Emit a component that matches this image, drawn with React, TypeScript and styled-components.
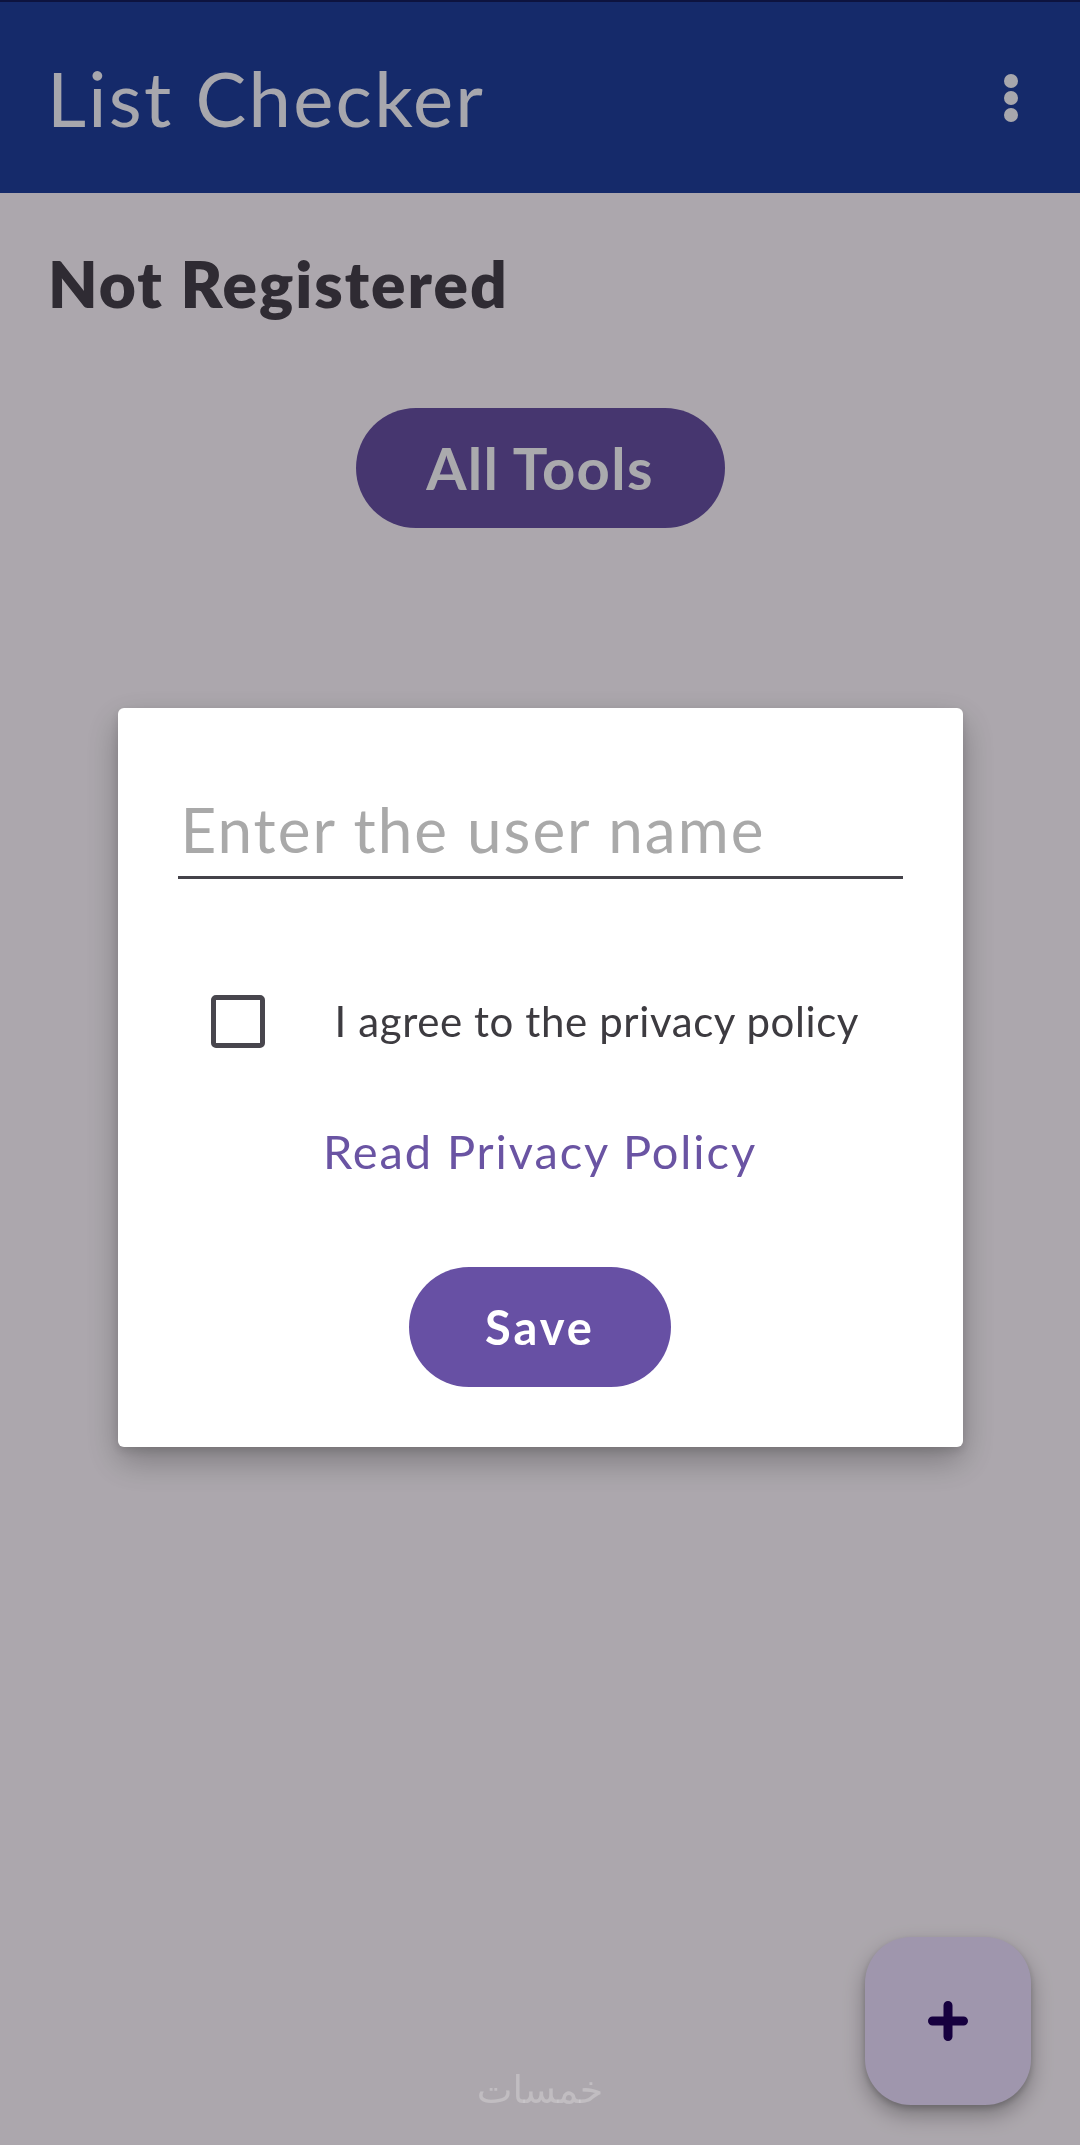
import React from "react";
import styled, { createGlobalStyle } from "styled-components";

const Global = createGlobalStyle`
  html, body { margin: 0; padding: 0; }
  body {
    background: #fef7ff;
    font-family: Lato, "Noto Sans", sans-serif;
    width: 1080px;
    height: 2145px;
    overflow: hidden;
  }
  * { box-sizing: border-box; }
`;

const Page = styled.div`
  position: relative;
  width: 1080px;
  height: 2145px;
  background: #fef7ff;
  display: flex;
  flex-direction: column;
`;

const AppBar = styled.header`
  height: 193px;
  border-top: 2px solid #141d5e;
  background: #1f3e9d;
  display: flex;
  align-items: center;
  justify-content: space-between;
  padding: 0 54px 0 47px;
`;

const AppTitle = styled.h1`
  margin: 0;
  font-family: Lato, sans-serif;
  font-weight: 400;
  font-size: 76px;
  line-height: 1.2;
  color: #f7f7ff;
  letter-spacing: 2.3px;
`;

const MenuButton = styled.button`
  border: 0;
  background: transparent;
  padding: 0;
  width: 30px;
  height: 60px;
  display: flex;
  align-items: center;
  justify-content: center;
  color: #f7f7ff;
`;

const Content = styled.main`
  display: flex;
  flex-direction: column;
  padding: 53px 48px 0;
`;

const Status = styled.h2`
  margin: 0;
  font-family: Lato, sans-serif;
  font-weight: 800;
  font-size: 64px;
  line-height: 1.2;
  color: #46404c;
  letter-spacing: 2px;
`;

const PillButton = styled.button<{ $w: number; $h: number; $fs: number; $ls: number; $bg: string; $fg: string }>`
  align-self: center;
  width: ${(p) => p.$w}px;
  height: ${(p) => p.$h}px;
  border: 0;
  border-radius: 999px;
  background: ${(p) => p.$bg};
  color: ${(p) => p.$fg};
  font-family: Lato, sans-serif;
  font-weight: 700;
  font-size: ${(p) => p.$fs}px;
  letter-spacing: ${(p) => p.$ls}px;
  line-height: 1;
  padding: 0;
  display: flex;
  align-items: center;
  justify-content: center;
`;

const ToolsWrap = styled.div`
  margin-top: 85px;
  display: flex;
  justify-content: center;
`;

const Scrim = styled.div`
  position: fixed;
  inset: 0;
  background: rgba(0, 0, 0, 0.32);
  display: flex;
  align-items: center;
  justify-content: center;
  padding-top: 10px;
`;

const Dialog = styled.div`
  width: 845px;
  height: 739px;
  background: #ffffff;
  border-radius: 6px;
  box-shadow: 0 14px 34px rgba(0, 0, 0, 0.28), 0 4px 10px rgba(0, 0, 0, 0.12);
  padding: 83px 60px 60px;
  display: flex;
  flex-direction: column;
`;

const NameInput = styled.input`
  width: 100%;
  border: 0;
  border-bottom: 3px solid #444249;
  outline: none;
  background: transparent;
  font-family: Lato, sans-serif;
  font-size: 62px;
  letter-spacing: 2px;
  line-height: 1.2;
  height: 88px;
  padding: 0 0 10px 3px;
  color: #333;
  &::placeholder {
    color: #a9a9a9;
  }
`;

const AgreeRow = styled.label`
  margin-top: 116px;
  padding-left: 33px;
  display: flex;
  align-items: center;
  gap: 70px;
`;

const Box = styled.span`
  width: 54px;
  height: 53px;
  border: 5px solid #48464d;
  border-radius: 5px;
  flex: none;
`;

const AgreeText = styled.span`
  font-family: Lato, sans-serif;
  font-size: 42px;
  letter-spacing: 0.6px;
  line-height: 1.2;
  color: #3d3b40;
`;

const PolicyLink = styled.a`
  margin-top: 75px;
  align-self: center;
  font-family: Lato, sans-serif;
  font-size: 47px;
  letter-spacing: 1.9px;
  line-height: 1.2;
  color: #6a54a3;
  text-decoration: none;
`;

const SaveWrap = styled.div`
  margin-top: auto;
  display: flex;
  justify-content: center;
`;

const Fab = styled.button`
  position: fixed;
  right: 49px;
  bottom: 40px;
  width: 166px;
  height: 168px;
  border: 0;
  border-radius: 46px;
  background: #eaddff;
  box-shadow: 0 10px 22px rgba(0, 0, 0, 0.3), 0 3px 6px rgba(0, 0, 0, 0.18);
  display: flex;
  align-items: center;
  justify-content: center;
  padding: 0;
`;

const Watermark = styled.div`
  position: fixed;
  left: 0;
  right: 0;
  bottom: 36px;
  text-align: center;
  font-family: "DejaVu Sans", sans-serif;
  font-size: 38px;
  line-height: 1;
  color: rgba(255, 255, 255, 0.25);
  pointer-events: none;
`;

export default function App() {
  return (
    <>
      <Global />
      <Page>
        <AppBar>
          <AppTitle>List Checker</AppTitle>
          <MenuButton aria-label="More options">
            <svg width="16" height="50" viewBox="0 0 16 50">
              <circle cx="8" cy="8" r="7" fill="currentColor" />
              <circle cx="8" cy="25" r="7" fill="currentColor" />
              <circle cx="8" cy="42" r="7" fill="currentColor" />
            </svg>
          </MenuButton>
        </AppBar>
        <Content>
          <Status>Not Registered</Status>
          <ToolsWrap>
            <PillButton $w={369} $h={120} $fs={58} $ls={1.3} $bg="#6750a4" $fg="#fbfbff">
              All Tools
            </PillButton>
          </ToolsWrap>
        </Content>
        <Fab aria-label="Add">
          <svg width="40" height="40" viewBox="0 0 40 40">
            <path d="M20 4.5 V35.5 M4.5 20 H35.5" stroke="#21005d" strokeWidth="9" strokeLinecap="round" fill="none" />
          </svg>
        </Fab>
      </Page>
      <Scrim>
        <Dialog>
          <NameInput placeholder="Enter the user name" />
          <AgreeRow>
            <Box />
            <AgreeText>I agree to the privacy policy</AgreeText>
          </AgreeRow>
          <PolicyLink>Read Privacy Policy</PolicyLink>
          <SaveWrap>
            <PillButton $w={262} $h={120} $fs={47} $ls={3} $bg="#6750a4" $fg="#ffffff">
              Save
            </PillButton>
          </SaveWrap>
        </Dialog>
      </Scrim>
      <Watermark>خمسات</Watermark>
    </>
  );
}
